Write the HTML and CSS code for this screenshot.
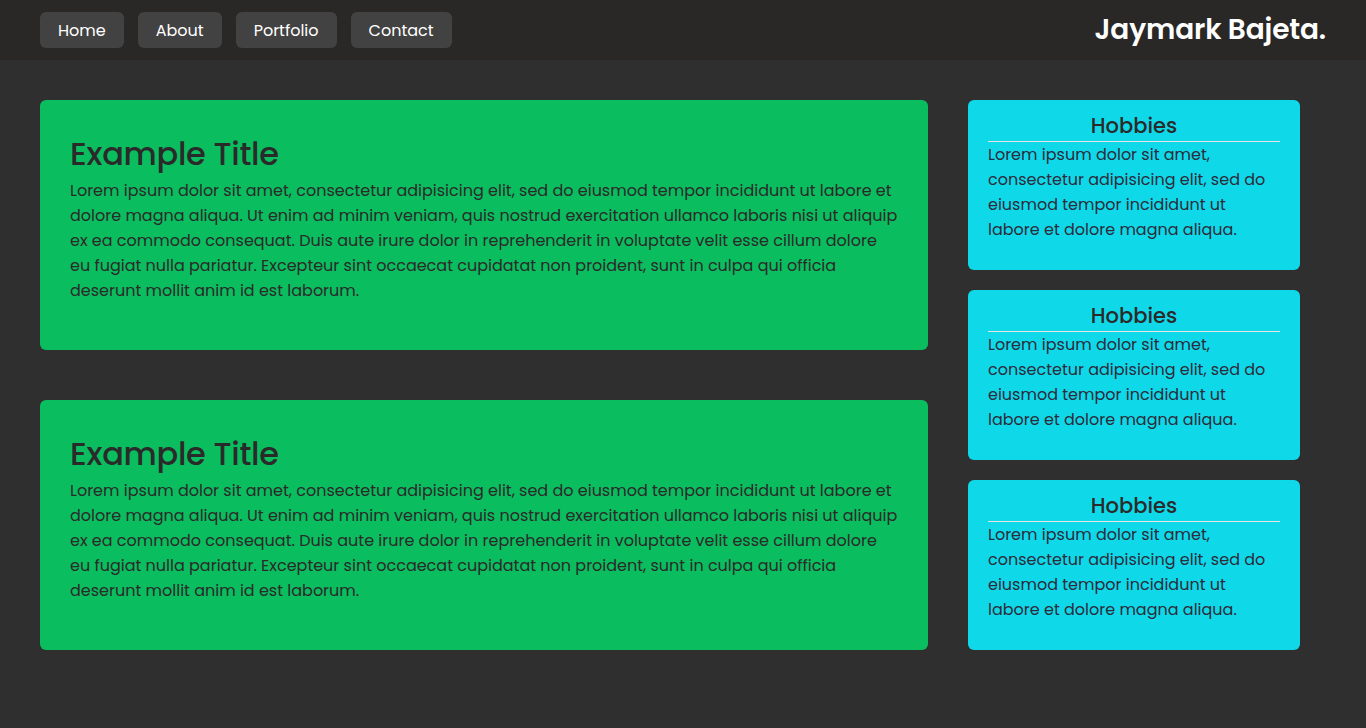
FILE: index.html
```html
<!DOCTYPE html>
<html lang="en">
<head>
<meta charset="utf-8">
<title>Jaymark Bajeta</title>
<link rel="stylesheet" href="styles.css">
</head>
<body>
<header class="topbar">
  <nav class="nav">
    <a class="nav-btn" href="#">Home</a>
    <a class="nav-btn" href="#">About</a>
    <a class="nav-btn" href="#">Portfolio</a>
    <a class="nav-btn" href="#">Contact</a>
  </nav>
  <div class="logo">Jaymark Bajeta.</div>
</header>
<main class="layout">
  <section class="main-col">
    <article class="card">
      <h1 class="card-title">Example Title</h1>
      <p class="card-text">Lorem ipsum dolor sit amet, consectetur adipisicing elit, sed do eiusmod tempor incididunt ut labore et dolore magna aliqua. Ut enim ad minim veniam, quis nostrud exercitation ullamco laboris nisi ut aliquip ex ea commodo consequat. Duis aute irure dolor in reprehenderit in voluptate velit esse cillum dolore eu fugiat nulla pariatur. Excepteur sint occaecat cupidatat non proident, sunt in culpa qui officia deserunt mollit anim id est laborum.</p>
    </article>
    <article class="card">
      <h1 class="card-title">Example Title</h1>
      <p class="card-text">Lorem ipsum dolor sit amet, consectetur adipisicing elit, sed do eiusmod tempor incididunt ut labore et dolore magna aliqua. Ut enim ad minim veniam, quis nostrud exercitation ullamco laboris nisi ut aliquip ex ea commodo consequat. Duis aute irure dolor in reprehenderit in voluptate velit esse cillum dolore eu fugiat nulla pariatur. Excepteur sint occaecat cupidatat non proident, sunt in culpa qui officia deserunt mollit anim id est laborum.</p>
    </article>
  </section>
  <aside class="side-col">
    <div class="side-card">
      <h2 class="side-title">Hobbies</h2>
      <p class="side-text">Lorem ipsum dolor sit amet, consectetur adipisicing elit, sed do eiusmod tempor incididunt ut labore et dolore magna aliqua.</p>
    </div>
    <div class="side-card">
      <h2 class="side-title">Hobbies</h2>
      <p class="side-text">Lorem ipsum dolor sit amet, consectetur adipisicing elit, sed do eiusmod tempor incididunt ut labore et dolore magna aliqua.</p>
    </div>
    <div class="side-card">
      <h2 class="side-title">Hobbies</h2>
      <p class="side-text">Lorem ipsum dolor sit amet, consectetur adipisicing elit, sed do eiusmod tempor incididunt ut labore et dolore magna aliqua.</p>
    </div>
  </aside>
</main>
</body>
</html>
```

FILE: styles.css
```css
* {
  box-sizing: border-box;
}

html, body {
  margin: 0;
  padding: 0;
}

body {
  background: #2f2f2f;
  font-family: "Poppins", "Open Sans", "DejaVu Sans", sans-serif;
  color: #2b2a2a;
  min-height: 728px;
}

.topbar {
  height: 60px;
  background: #2a2826;
  display: flex;
  align-items: center;
  justify-content: space-between;
  padding: 0 40px;
}

.nav {
  display: flex;
  gap: 14px;
}

.nav-btn {
  display: flex;
  align-items: center;
  justify-content: center;
  height: 36px;
  padding: 0 18px;
  background: #434242;
  color: #ffffff;
  border-radius: 6px;
  text-decoration: none;
  font-size: 16px;
}

.logo {
  color: #ffffff;
  font-size: 28px;
  font-weight: 600;
  letter-spacing: -0.15px;
}

.layout {
  display: grid;
  grid-template-columns: 888px 332px;
  column-gap: 40px;
  padding: 40px 40px;
  align-items: start;
}

.main-col {
  display: flex;
  flex-direction: column;
  gap: 50px;
}

.card {
  background: #0abd5e;
  border-radius: 6px;
  padding: 30px;
  height: 250px;
}

.card-title {
  margin: 0;
  font-size: 32px;
  font-weight: 500;
  letter-spacing: -0.3px;
  line-height: 48px;
  color: #2b2a2a;
}

.card-text {
  margin: 0;
  font-size: 16px;
  line-height: 25px;
}

.side-col {
  display: flex;
  flex-direction: column;
  gap: 20px;
}

.side-card {
  background: #0fd9e9;
  border-radius: 6px;
  padding: 10px 20px;
  height: 170px;
}

.side-title {
  margin: 0;
  text-align: center;
  font-size: 21px;
  font-weight: 500;
  line-height: 31px;
  border-bottom: 1px solid #e8e4e4;
  color: #2b2a2a;
}

.side-text {
  margin: 0;
  font-size: 16px;
  line-height: 25px;
  color: #2c2b3a;
}
```
